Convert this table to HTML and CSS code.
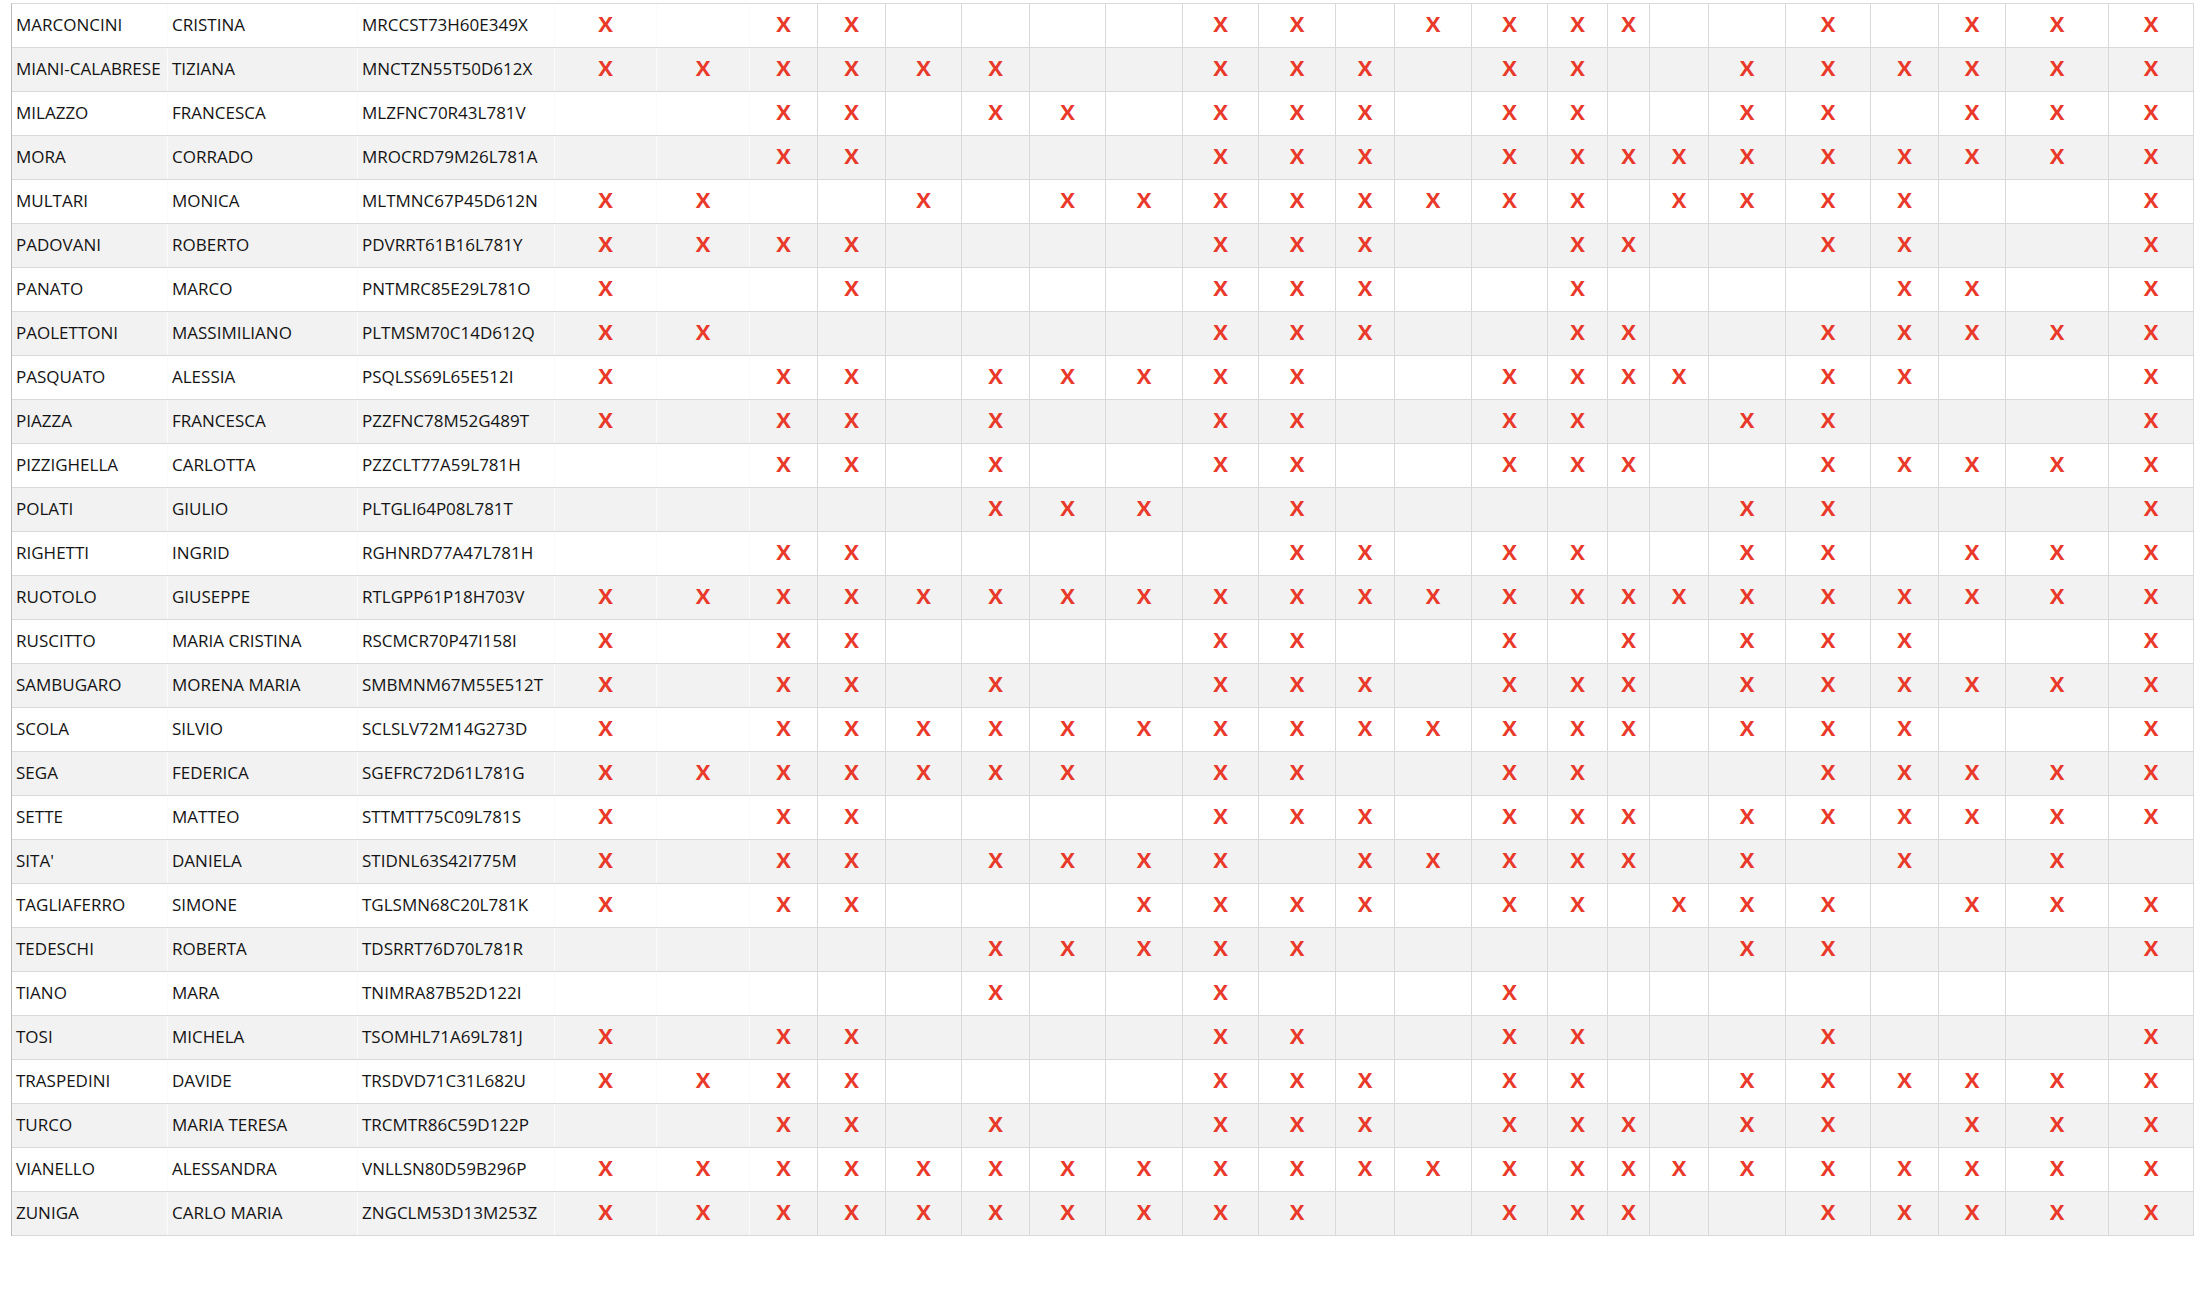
FILE: index.html
```html
<!DOCTYPE html>
<html lang="it">
<head>
<meta charset="utf-8">
<title>Elenco</title>
<link rel="stylesheet" href="styles.css">
</head>
<body>
<div class="sheet">
<div class="r"><div class="t">MARCONCINI</div><div class="t">CRISTINA</div><div class="t">MRCCST73H60E349X</div><div class="m">X</div><div class="m"></div><div class="m">X</div><div class="m">X</div><div class="m"></div><div class="m"></div><div class="m"></div><div class="m"></div><div class="m">X</div><div class="m">X</div><div class="m"></div><div class="m">X</div><div class="m">X</div><div class="m">X</div><div class="m">X</div><div class="m"></div><div class="m"></div><div class="m">X</div><div class="m"></div><div class="m">X</div><div class="m">X</div><div class="m">X</div></div>
<div class="r"><div class="t">MIANI-CALABRESE</div><div class="t">TIZIANA</div><div class="t">MNCTZN55T50D612X</div><div class="m">X</div><div class="m">X</div><div class="m">X</div><div class="m">X</div><div class="m">X</div><div class="m">X</div><div class="m"></div><div class="m"></div><div class="m">X</div><div class="m">X</div><div class="m">X</div><div class="m"></div><div class="m">X</div><div class="m">X</div><div class="m"></div><div class="m"></div><div class="m">X</div><div class="m">X</div><div class="m">X</div><div class="m">X</div><div class="m">X</div><div class="m">X</div></div>
<div class="r"><div class="t">MILAZZO</div><div class="t">FRANCESCA</div><div class="t">MLZFNC70R43L781V</div><div class="m"></div><div class="m"></div><div class="m">X</div><div class="m">X</div><div class="m"></div><div class="m">X</div><div class="m">X</div><div class="m"></div><div class="m">X</div><div class="m">X</div><div class="m">X</div><div class="m"></div><div class="m">X</div><div class="m">X</div><div class="m"></div><div class="m"></div><div class="m">X</div><div class="m">X</div><div class="m"></div><div class="m">X</div><div class="m">X</div><div class="m">X</div></div>
<div class="r"><div class="t">MORA</div><div class="t">CORRADO</div><div class="t">MROCRD79M26L781A</div><div class="m"></div><div class="m"></div><div class="m">X</div><div class="m">X</div><div class="m"></div><div class="m"></div><div class="m"></div><div class="m"></div><div class="m">X</div><div class="m">X</div><div class="m">X</div><div class="m"></div><div class="m">X</div><div class="m">X</div><div class="m">X</div><div class="m">X</div><div class="m">X</div><div class="m">X</div><div class="m">X</div><div class="m">X</div><div class="m">X</div><div class="m">X</div></div>
<div class="r"><div class="t">MULTARI</div><div class="t">MONICA</div><div class="t">MLTMNC67P45D612N</div><div class="m">X</div><div class="m">X</div><div class="m"></div><div class="m"></div><div class="m">X</div><div class="m"></div><div class="m">X</div><div class="m">X</div><div class="m">X</div><div class="m">X</div><div class="m">X</div><div class="m">X</div><div class="m">X</div><div class="m">X</div><div class="m"></div><div class="m">X</div><div class="m">X</div><div class="m">X</div><div class="m">X</div><div class="m"></div><div class="m"></div><div class="m">X</div></div>
<div class="r"><div class="t">PADOVANI</div><div class="t">ROBERTO</div><div class="t">PDVRRT61B16L781Y</div><div class="m">X</div><div class="m">X</div><div class="m">X</div><div class="m">X</div><div class="m"></div><div class="m"></div><div class="m"></div><div class="m"></div><div class="m">X</div><div class="m">X</div><div class="m">X</div><div class="m"></div><div class="m"></div><div class="m">X</div><div class="m">X</div><div class="m"></div><div class="m"></div><div class="m">X</div><div class="m">X</div><div class="m"></div><div class="m"></div><div class="m">X</div></div>
<div class="r"><div class="t">PANATO</div><div class="t">MARCO</div><div class="t">PNTMRC85E29L781O</div><div class="m">X</div><div class="m"></div><div class="m"></div><div class="m">X</div><div class="m"></div><div class="m"></div><div class="m"></div><div class="m"></div><div class="m">X</div><div class="m">X</div><div class="m">X</div><div class="m"></div><div class="m"></div><div class="m">X</div><div class="m"></div><div class="m"></div><div class="m"></div><div class="m"></div><div class="m">X</div><div class="m">X</div><div class="m"></div><div class="m">X</div></div>
<div class="r"><div class="t">PAOLETTONI</div><div class="t">MASSIMILIANO</div><div class="t">PLTMSM70C14D612Q</div><div class="m">X</div><div class="m">X</div><div class="m"></div><div class="m"></div><div class="m"></div><div class="m"></div><div class="m"></div><div class="m"></div><div class="m">X</div><div class="m">X</div><div class="m">X</div><div class="m"></div><div class="m"></div><div class="m">X</div><div class="m">X</div><div class="m"></div><div class="m"></div><div class="m">X</div><div class="m">X</div><div class="m">X</div><div class="m">X</div><div class="m">X</div></div>
<div class="r"><div class="t">PASQUATO</div><div class="t">ALESSIA</div><div class="t">PSQLSS69L65E512I</div><div class="m">X</div><div class="m"></div><div class="m">X</div><div class="m">X</div><div class="m"></div><div class="m">X</div><div class="m">X</div><div class="m">X</div><div class="m">X</div><div class="m">X</div><div class="m"></div><div class="m"></div><div class="m">X</div><div class="m">X</div><div class="m">X</div><div class="m">X</div><div class="m"></div><div class="m">X</div><div class="m">X</div><div class="m"></div><div class="m"></div><div class="m">X</div></div>
<div class="r"><div class="t">PIAZZA</div><div class="t">FRANCESCA</div><div class="t">PZZFNC78M52G489T</div><div class="m">X</div><div class="m"></div><div class="m">X</div><div class="m">X</div><div class="m"></div><div class="m">X</div><div class="m"></div><div class="m"></div><div class="m">X</div><div class="m">X</div><div class="m"></div><div class="m"></div><div class="m">X</div><div class="m">X</div><div class="m"></div><div class="m"></div><div class="m">X</div><div class="m">X</div><div class="m"></div><div class="m"></div><div class="m"></div><div class="m">X</div></div>
<div class="r"><div class="t">PIZZIGHELLA</div><div class="t">CARLOTTA</div><div class="t">PZZCLT77A59L781H</div><div class="m"></div><div class="m"></div><div class="m">X</div><div class="m">X</div><div class="m"></div><div class="m">X</div><div class="m"></div><div class="m"></div><div class="m">X</div><div class="m">X</div><div class="m"></div><div class="m"></div><div class="m">X</div><div class="m">X</div><div class="m">X</div><div class="m"></div><div class="m"></div><div class="m">X</div><div class="m">X</div><div class="m">X</div><div class="m">X</div><div class="m">X</div></div>
<div class="r"><div class="t">POLATI</div><div class="t">GIULIO</div><div class="t">PLTGLI64P08L781T</div><div class="m"></div><div class="m"></div><div class="m"></div><div class="m"></div><div class="m"></div><div class="m">X</div><div class="m">X</div><div class="m">X</div><div class="m"></div><div class="m">X</div><div class="m"></div><div class="m"></div><div class="m"></div><div class="m"></div><div class="m"></div><div class="m"></div><div class="m">X</div><div class="m">X</div><div class="m"></div><div class="m"></div><div class="m"></div><div class="m">X</div></div>
<div class="r"><div class="t">RIGHETTI</div><div class="t">INGRID</div><div class="t">RGHNRD77A47L781H</div><div class="m"></div><div class="m"></div><div class="m">X</div><div class="m">X</div><div class="m"></div><div class="m"></div><div class="m"></div><div class="m"></div><div class="m"></div><div class="m">X</div><div class="m">X</div><div class="m"></div><div class="m">X</div><div class="m">X</div><div class="m"></div><div class="m"></div><div class="m">X</div><div class="m">X</div><div class="m"></div><div class="m">X</div><div class="m">X</div><div class="m">X</div></div>
<div class="r"><div class="t">RUOTOLO</div><div class="t">GIUSEPPE</div><div class="t">RTLGPP61P18H703V</div><div class="m">X</div><div class="m">X</div><div class="m">X</div><div class="m">X</div><div class="m">X</div><div class="m">X</div><div class="m">X</div><div class="m">X</div><div class="m">X</div><div class="m">X</div><div class="m">X</div><div class="m">X</div><div class="m">X</div><div class="m">X</div><div class="m">X</div><div class="m">X</div><div class="m">X</div><div class="m">X</div><div class="m">X</div><div class="m">X</div><div class="m">X</div><div class="m">X</div></div>
<div class="r"><div class="t">RUSCITTO</div><div class="t">MARIA CRISTINA</div><div class="t">RSCMCR70P47I158I</div><div class="m">X</div><div class="m"></div><div class="m">X</div><div class="m">X</div><div class="m"></div><div class="m"></div><div class="m"></div><div class="m"></div><div class="m">X</div><div class="m">X</div><div class="m"></div><div class="m"></div><div class="m">X</div><div class="m"></div><div class="m">X</div><div class="m"></div><div class="m">X</div><div class="m">X</div><div class="m">X</div><div class="m"></div><div class="m"></div><div class="m">X</div></div>
<div class="r"><div class="t">SAMBUGARO</div><div class="t">MORENA MARIA</div><div class="t">SMBMNM67M55E512T</div><div class="m">X</div><div class="m"></div><div class="m">X</div><div class="m">X</div><div class="m"></div><div class="m">X</div><div class="m"></div><div class="m"></div><div class="m">X</div><div class="m">X</div><div class="m">X</div><div class="m"></div><div class="m">X</div><div class="m">X</div><div class="m">X</div><div class="m"></div><div class="m">X</div><div class="m">X</div><div class="m">X</div><div class="m">X</div><div class="m">X</div><div class="m">X</div></div>
<div class="r"><div class="t">SCOLA</div><div class="t">SILVIO</div><div class="t">SCLSLV72M14G273D</div><div class="m">X</div><div class="m"></div><div class="m">X</div><div class="m">X</div><div class="m">X</div><div class="m">X</div><div class="m">X</div><div class="m">X</div><div class="m">X</div><div class="m">X</div><div class="m">X</div><div class="m">X</div><div class="m">X</div><div class="m">X</div><div class="m">X</div><div class="m"></div><div class="m">X</div><div class="m">X</div><div class="m">X</div><div class="m"></div><div class="m"></div><div class="m">X</div></div>
<div class="r"><div class="t">SEGA</div><div class="t">FEDERICA</div><div class="t">SGEFRC72D61L781G</div><div class="m">X</div><div class="m">X</div><div class="m">X</div><div class="m">X</div><div class="m">X</div><div class="m">X</div><div class="m">X</div><div class="m"></div><div class="m">X</div><div class="m">X</div><div class="m"></div><div class="m"></div><div class="m">X</div><div class="m">X</div><div class="m"></div><div class="m"></div><div class="m"></div><div class="m">X</div><div class="m">X</div><div class="m">X</div><div class="m">X</div><div class="m">X</div></div>
<div class="r"><div class="t">SETTE</div><div class="t">MATTEO</div><div class="t">STTMTT75C09L781S</div><div class="m">X</div><div class="m"></div><div class="m">X</div><div class="m">X</div><div class="m"></div><div class="m"></div><div class="m"></div><div class="m"></div><div class="m">X</div><div class="m">X</div><div class="m">X</div><div class="m"></div><div class="m">X</div><div class="m">X</div><div class="m">X</div><div class="m"></div><div class="m">X</div><div class="m">X</div><div class="m">X</div><div class="m">X</div><div class="m">X</div><div class="m">X</div></div>
<div class="r"><div class="t">SITA'</div><div class="t">DANIELA</div><div class="t">STIDNL63S42I775M</div><div class="m">X</div><div class="m"></div><div class="m">X</div><div class="m">X</div><div class="m"></div><div class="m">X</div><div class="m">X</div><div class="m">X</div><div class="m">X</div><div class="m"></div><div class="m">X</div><div class="m">X</div><div class="m">X</div><div class="m">X</div><div class="m">X</div><div class="m"></div><div class="m">X</div><div class="m"></div><div class="m">X</div><div class="m"></div><div class="m">X</div><div class="m"></div></div>
<div class="r"><div class="t">TAGLIAFERRO</div><div class="t">SIMONE</div><div class="t">TGLSMN68C20L781K</div><div class="m">X</div><div class="m"></div><div class="m">X</div><div class="m">X</div><div class="m"></div><div class="m"></div><div class="m"></div><div class="m">X</div><div class="m">X</div><div class="m">X</div><div class="m">X</div><div class="m"></div><div class="m">X</div><div class="m">X</div><div class="m"></div><div class="m">X</div><div class="m">X</div><div class="m">X</div><div class="m"></div><div class="m">X</div><div class="m">X</div><div class="m">X</div></div>
<div class="r"><div class="t">TEDESCHI</div><div class="t">ROBERTA</div><div class="t">TDSRRT76D70L781R</div><div class="m"></div><div class="m"></div><div class="m"></div><div class="m"></div><div class="m"></div><div class="m">X</div><div class="m">X</div><div class="m">X</div><div class="m">X</div><div class="m">X</div><div class="m"></div><div class="m"></div><div class="m"></div><div class="m"></div><div class="m"></div><div class="m"></div><div class="m">X</div><div class="m">X</div><div class="m"></div><div class="m"></div><div class="m"></div><div class="m">X</div></div>
<div class="r"><div class="t">TIANO</div><div class="t">MARA</div><div class="t">TNIMRA87B52D122I</div><div class="m"></div><div class="m"></div><div class="m"></div><div class="m"></div><div class="m"></div><div class="m">X</div><div class="m"></div><div class="m"></div><div class="m">X</div><div class="m"></div><div class="m"></div><div class="m"></div><div class="m">X</div><div class="m"></div><div class="m"></div><div class="m"></div><div class="m"></div><div class="m"></div><div class="m"></div><div class="m"></div><div class="m"></div><div class="m"></div></div>
<div class="r"><div class="t">TOSI</div><div class="t">MICHELA</div><div class="t">TSOMHL71A69L781J</div><div class="m">X</div><div class="m"></div><div class="m">X</div><div class="m">X</div><div class="m"></div><div class="m"></div><div class="m"></div><div class="m"></div><div class="m">X</div><div class="m">X</div><div class="m"></div><div class="m"></div><div class="m">X</div><div class="m">X</div><div class="m"></div><div class="m"></div><div class="m"></div><div class="m">X</div><div class="m"></div><div class="m"></div><div class="m"></div><div class="m">X</div></div>
<div class="r"><div class="t">TRASPEDINI</div><div class="t">DAVIDE</div><div class="t">TRSDVD71C31L682U</div><div class="m">X</div><div class="m">X</div><div class="m">X</div><div class="m">X</div><div class="m"></div><div class="m"></div><div class="m"></div><div class="m"></div><div class="m">X</div><div class="m">X</div><div class="m">X</div><div class="m"></div><div class="m">X</div><div class="m">X</div><div class="m"></div><div class="m"></div><div class="m">X</div><div class="m">X</div><div class="m">X</div><div class="m">X</div><div class="m">X</div><div class="m">X</div></div>
<div class="r"><div class="t">TURCO</div><div class="t">MARIA TERESA</div><div class="t">TRCMTR86C59D122P</div><div class="m"></div><div class="m"></div><div class="m">X</div><div class="m">X</div><div class="m"></div><div class="m">X</div><div class="m"></div><div class="m"></div><div class="m">X</div><div class="m">X</div><div class="m">X</div><div class="m"></div><div class="m">X</div><div class="m">X</div><div class="m">X</div><div class="m"></div><div class="m">X</div><div class="m">X</div><div class="m"></div><div class="m">X</div><div class="m">X</div><div class="m">X</div></div>
<div class="r"><div class="t">VIANELLO</div><div class="t">ALESSANDRA</div><div class="t">VNLLSN80D59B296P</div><div class="m">X</div><div class="m">X</div><div class="m">X</div><div class="m">X</div><div class="m">X</div><div class="m">X</div><div class="m">X</div><div class="m">X</div><div class="m">X</div><div class="m">X</div><div class="m">X</div><div class="m">X</div><div class="m">X</div><div class="m">X</div><div class="m">X</div><div class="m">X</div><div class="m">X</div><div class="m">X</div><div class="m">X</div><div class="m">X</div><div class="m">X</div><div class="m">X</div></div>
<div class="r"><div class="t">ZUNIGA</div><div class="t">CARLO MARIA</div><div class="t">ZNGCLM53D13M253Z</div><div class="m">X</div><div class="m">X</div><div class="m">X</div><div class="m">X</div><div class="m">X</div><div class="m">X</div><div class="m">X</div><div class="m">X</div><div class="m">X</div><div class="m">X</div><div class="m"></div><div class="m"></div><div class="m">X</div><div class="m">X</div><div class="m">X</div><div class="m"></div><div class="m"></div><div class="m">X</div><div class="m">X</div><div class="m">X</div><div class="m">X</div><div class="m">X</div></div>
</div>
</body>
</html>
```

FILE: styles.css
```css
html, body {
  margin: 0;
  padding: 0;
  background: #ffffff;
}

body {
  font-family: "Open Sans", "Liberation Sans", Arial, sans-serif;
  color: #141414;
}

.sheet {
  margin: 3px 0 0 11px;
  width: max-content;
  border-top: 1px solid #d9d9d9;
  border-left: 1px solid #bdbdbd;
}

.r {
  display: grid;
  grid-template-columns: 156px 190px 197px 102px 93px 68px 68px 76px 68px 76px 77px 76px 77px 59px 77px 76px 60px 42px 59px 77px 85px 68px 67px 103px 85px;
  height: 44px;
  box-sizing: border-box;
  border-bottom: 1px solid #d9d9d9;
  background: #ffffff;
}

.r:nth-child(even) {
  background: #f2f2f2;
}

.r > div {
  box-sizing: border-box;
  display: flex;
  align-items: center;
  border-right: 1px solid #d9d9d9;
  overflow: hidden;
  white-space: nowrap;
}

.r > div:nth-child(-n+5) {
  border-right-color: #fbfbfb;
}

.t {
  padding: 0 0 3px 4px;
  font-size: 17px;
}

.m {
  justify-content: center;
  padding-bottom: 5px;
  color: #e8392a;
  font-weight: 700;
  font-size: 22px;
}
```
